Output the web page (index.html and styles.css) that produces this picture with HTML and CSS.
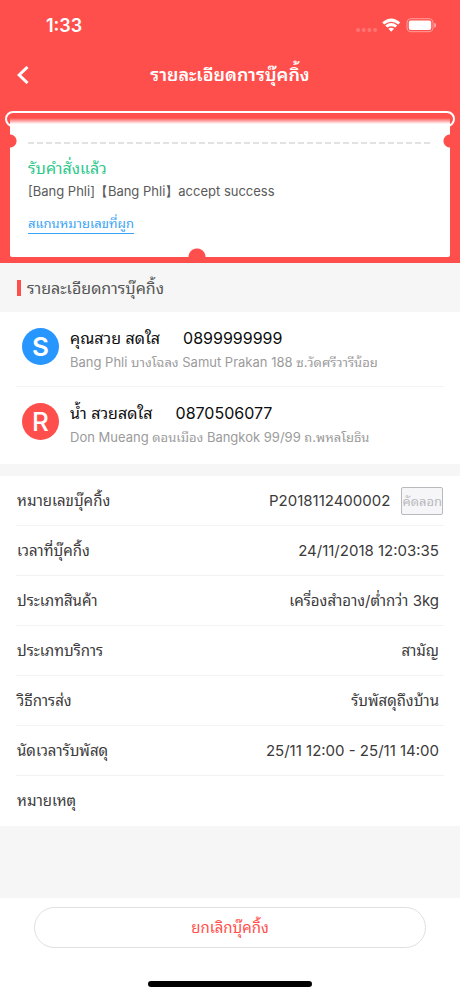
FILE: index.html
```html
<!DOCTYPE html>
<html lang="th">
<head>
<meta charset="utf-8">
<meta name="viewport" content="width=device-width, initial-scale=1">
<title>รายละเอียดการบุ๊คกิ้ง</title>
<link rel="stylesheet" href="styles.css">
</head>
<body>
<div class="screen">
  <header class="top">
    <div class="status">
      <span class="clock">1:33</span>
      <svg class="status-icons" width="80" height="16" viewBox="0 0 80 16" aria-hidden="true">
        <g fill="#fff" fill-opacity=".22"><circle cx="2" cy="12" r="2"/><circle cx="7.700" cy="12" r="2"/><circle cx="13.400" cy="12" r="2"/><circle cx="19.100" cy="12" r="2"/></g>
        <path fill="#fff" d="M26.200 4.400Q35.200 -3.400 44.200 4.400L42.200 6.500Q35.200 .9 28.200 6.500ZM29.200 7.500Q35.200 2.700 41.200 7.500L39.200 9.600Q35.200 6.700 31.200 9.600ZM32.400 10.700Q35.200 8.600 38 10.700L35.200 13.700Z"/>
        <rect x="51" y=".7" width="26" height="13" rx="3.800" fill="none" stroke="#fff" stroke-opacity=".45"/>
        <rect x="52.800" y="2.500" width="22.400" height="9.400" rx="2" fill="#fff"/>
        <path d="M78.200 5a2.200 2.200 0 0 1 0 4.400Z" fill="#fff" fill-opacity=".5"/>
      </svg>
    </div>
    <nav class="nav">
      <button class="back" type="button" aria-label="กลับ">
        <svg width="12" height="18" viewBox="0 0 12 18" aria-hidden="true"><path d="M10.500 1L2.200 9l8.300 8" fill="none" stroke="#fff" stroke-width="3"/></svg>
      </button>
      <h1 class="title">รายละเอียดการบุ๊คกิ้ง</h1>
    </nav>
    <div class="slot"></div>
    <section class="ticket">
      <svg class="dashes" width="100%" height="2" aria-hidden="true"><line x1="0" y1="1" x2="100%" y2="1" stroke="#e2e2e2" stroke-width="2" stroke-dasharray="6 3"/></svg>
      <h2 class="state">รับคำสั่งแล้ว</h2>
      <p class="message">[Bang Phli]【Bang Phli】accept success</p>
      <a class="scan" href="#">สแกนหมายเลขที่ผูก</a>
    </section>
  </header>

  <main class="content">
    <h2 class="section-title">รายละเอียดการบุ๊คกิ้ง</h2>
    <section class="card contacts">
      <article class="contact">
        <span class="avatar sender">S</span>
        <div class="person">
          <p class="name"><span>คุณสวย สดใส</span><span>0899999999</span></p>
          <p class="address">Bang Phli บางโฉลง Samut Prakan 188 ซ.วัดศรีวารีน้อย</p>
        </div>
      </article>
      <article class="contact">
        <span class="avatar receiver">R</span>
        <div class="person">
          <p class="name"><span>น้ำ สวยสดใส</span><span>0870506077</span></p>
          <p class="address">Don Mueang ดอนเมือง Bangkok 99/99 ถ.พหลโยธิน</p>
        </div>
      </article>
    </section>
    <dl class="card details">
      <div class="row has-action"><dt>หมายเลขบุ๊คกิ้ง</dt><dd>P2018112400002<button class="copy" type="button">คัดลอก</button></dd></div>
      <div class="row"><dt>เวลาที่บุ๊คกิ้ง</dt><dd>24/11/2018 12:03:35</dd></div>
      <div class="row"><dt>ประเภทสินค้า</dt><dd>เครื่องสำอาง/ต่ำกว่า 3kg</dd></div>
      <div class="row"><dt>ประเภทบริการ</dt><dd>สามัญ</dd></div>
      <div class="row"><dt>วิธีการส่ง</dt><dd>รับพัสดุถึงบ้าน</dd></div>
      <div class="row"><dt>นัดเวลารับพัสดุ</dt><dd>25/11 12:00 - 25/11 14:00</dd></div>
      <div class="row"><dt>หมายเหตุ</dt><dd></dd></div>
    </dl>
  </main>

  <footer class="footer">
    <button class="cancel" type="button">ยกเลิกบุ๊คกิ้ง</button>
    <div class="home-bar"></div>
  </footer>
</div>
</body>
</html>
```

FILE: styles.css
```css
:root {
  --red: #ff4f4c;
  --page: #f6f6f6;
  --line: #f3f3f3;
}

* { box-sizing: border-box; }

body {
  margin: 0;
  background: var(--page);
  color: #3c3a3b;
  font: 15px/20px Inter, "Noto Sans Thai Looped", "Noto Sans Thai", Loma, sans-serif;
}

h1, h2, p, dl, dd { margin: 0; }

button { font: inherit; padding: 0; cursor: pointer; }

.screen {
  display: flex;
  flex-direction: column;
  min-height: 100vh;
}

.top {
  background: var(--red);
  padding-bottom: 6px;
}

.status {
  display: flex;
  justify-content: space-between;
  align-items: center;
  height: 50px;
  padding: 2px 24px 0 46px;
  color: #fff;
}

.clock { font-size: 18px; font-weight: 600; }

.nav {
  display: grid;
  grid-template-columns: 48px 1fr 48px;
  align-items: center;
  height: 50px;
  color: #fff;
}

.back {
  display: flex;
  padding-left: 17px;
  border: 0;
  background: none;
}

.title {
  font-size: 18px;
  font-weight: 600;
  line-height: 24px;
  text-align: center;
}

.slot {
  height: 16px;
  margin: 11px 5px 0;
  border: 2px solid #fff;
  border-radius: 8px;
}

.ticket {
  position: relative;
  margin: -10px 10px 0;
  padding: 25px 18px 23px;
  border-radius: 0 0 2px 2px;
  background:
    radial-gradient(circle at 0 24px, var(--red) 6px, transparent 7px),
    radial-gradient(circle at 100% 24px, var(--red) 6px, transparent 7px),
    radial-gradient(circle at 187px 100%, var(--red) 8px, transparent 9px),
    linear-gradient(var(--red) 1px, #ff8a88 3px, #fff 7px);
}

.dashes { display: block; }

.state {
  margin-top: 12px;
  color: #2dc88c;
  font-size: 16px;
  font-weight: 400;
  line-height: 24px;
}

.message { color: #5a5a5a; font-size: 13px; line-height: 22px; }

.scan {
  display: inline-block;
  margin-top: 12px;
  border-bottom: 1px solid #3ba3f5;
  color: #3ba3f5;
  font-size: 13px;
  line-height: 19px;
  text-decoration: none;
}

.section-title {
  display: flex;
  align-items: center;
  gap: 6px;
  height: 49px;
  padding-left: 17px;
  color: #555;
  font-size: 16px;
  font-weight: 400;
}

.section-title::before {
  content: "";
  width: 4px;
  height: 16px;
  background: var(--red);
}

.card { background: #fff; padding: 0 16px; }

.contacts { padding-bottom: 3px; }

.contact {
  display: flex;
  gap: 11px;
  height: 74px;
  padding: 14px 0 0 6px;
}

.contact:first-child { height: 75px; border-bottom: 1px solid var(--line); }

.avatar {
  flex: none;
  width: 37px;
  height: 37px;
  margin-top: 2px;
  border-radius: 50%;
  color: #fff;
  font-size: 26px;
  font-weight: 600;
  line-height: 37px;
  text-align: center;
}

.sender { background: #2797ff; }
.receiver { background: var(--red); font-weight: 500; }

.name {
  display: flex;
  gap: 23px;
  color: #0c0c0c;
  font-size: 16px;
  line-height: 24px;
}

.address { color: #9b9b9b; font-size: 13px; line-height: 24px; }

.details { margin-top: 12px; }

.row {
  display: flex;
  justify-content: space-between;
  align-items: center;
  height: 50px;
  padding: 0 5px 0 1px;
  border-bottom: 1px solid var(--line);
}

.row:last-child { border-bottom: 0; }

.row dd { display: flex; align-items: center; gap: 11px; }

.row.has-action { padding-right: 1px; }

.copy {
  height: 28px;
  border: 1px solid #b9b9be;
  border-radius: 2px;
  background: #f6f6f8;
  color: #b9b9be;
  font-size: 13px;
}

.footer {
  margin-top: auto;
  padding: 9px 34px;
  background: #fff;
}

.cancel {
  display: block;
  width: 100%;
  height: 41px;
  border: 1px solid #e0e0e0;
  border-radius: 21px;
  background: #fff;
  color: var(--red);
  font-size: 15px;
}

.home-bar {
  width: 164px;
  height: 6px;
  margin: 33px auto 0;
  border-radius: 3px;
  background: #000;
}
```
